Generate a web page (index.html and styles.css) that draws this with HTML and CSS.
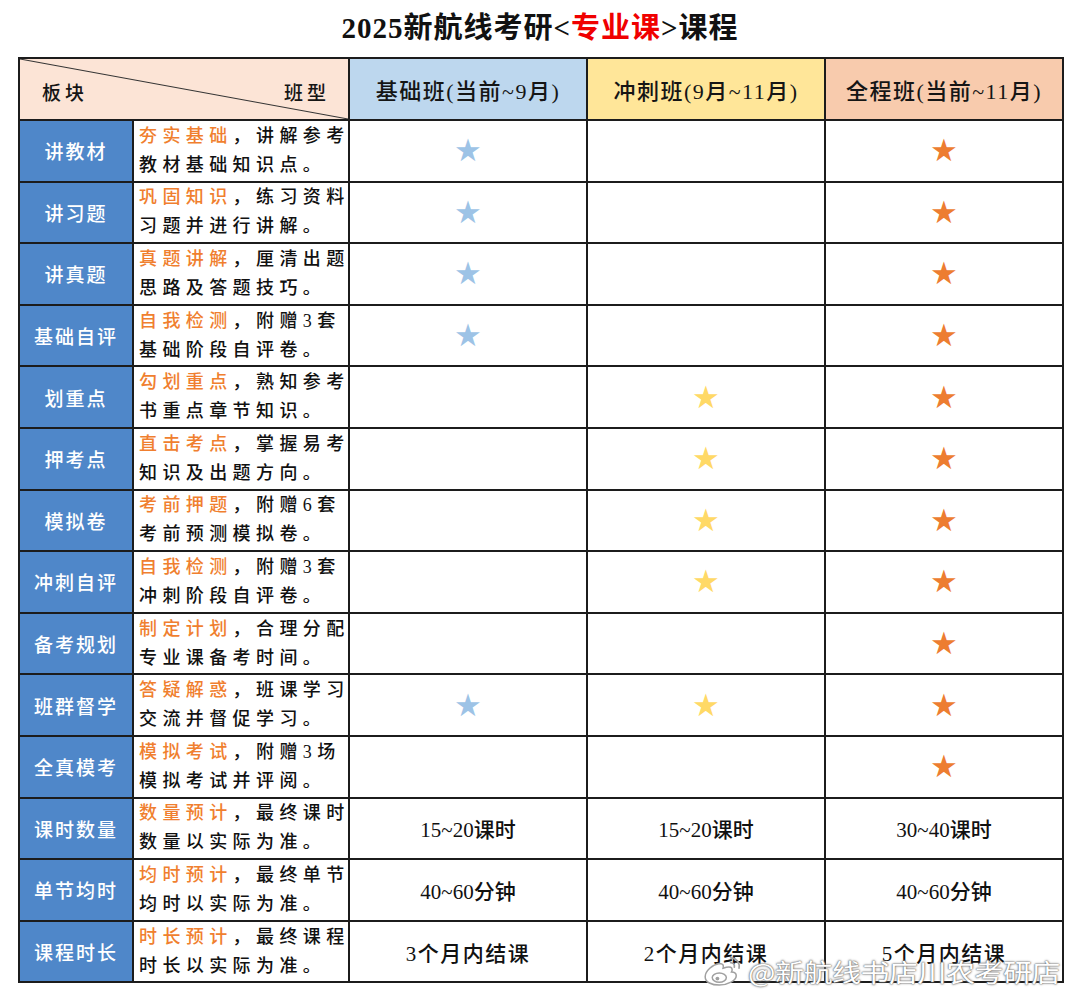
FILE: index.html
```html
<!DOCTYPE html>
<html lang="zh-CN">
<head>
<meta charset="utf-8">
<link rel="stylesheet" href="styles.css">
</head>
<body>
<div class="page">
  <h1 class="title">2025新航线考研&lt;<span class="red">专业课</span>&gt;课程</h1>
  <table class="grid">
    <colgroup>
      <col class="c1"><col class="c2"><col class="c3"><col class="c3"><col class="c3">
    </colgroup>
    <thead>
      <tr class="hrow">
        <th colspan="2" class="corner"><span class="lt">板块</span><span class="rt">班型</span></th>
        <th class="h-blue">基础班(当前~9月)</th>
        <th class="h-yellow">冲刺班(9月~11月)</th>
        <th class="h-orange">全程班(当前~11月)</th>
      </tr>
    </thead>
    <tbody>
      <tr><td class="cat">讲教材</td><td class="desc"><span class="o">夯实基础</span>，讲解参考<br>教材基础知识点。</td><td><span class="star b">★</span></td><td></td><td><span class="star r">★</span></td></tr>
      <tr><td class="cat">讲习题</td><td class="desc"><span class="o">巩固知识</span>，练习资料<br>习题并进行讲解。</td><td><span class="star b">★</span></td><td></td><td><span class="star r">★</span></td></tr>
      <tr><td class="cat">讲真题</td><td class="desc"><span class="o">真题讲解</span>，厘清出题<br>思路及答题技巧。</td><td><span class="star b">★</span></td><td></td><td><span class="star r">★</span></td></tr>
      <tr><td class="cat">基础自评</td><td class="desc"><span class="o">自我检测</span>，附赠3套<br>基础阶段自评卷。</td><td><span class="star b">★</span></td><td></td><td><span class="star r">★</span></td></tr>
      <tr><td class="cat">划重点</td><td class="desc"><span class="o">勾划重点</span>，熟知参考<br>书重点章节知识。</td><td></td><td><span class="star y">★</span></td><td><span class="star r">★</span></td></tr>
      <tr><td class="cat">押考点</td><td class="desc"><span class="o">直击考点</span>，掌握易考<br>知识及出题方向。</td><td></td><td><span class="star y">★</span></td><td><span class="star r">★</span></td></tr>
      <tr><td class="cat">模拟卷</td><td class="desc"><span class="o">考前押题</span>，附赠6套<br>考前预测模拟卷。</td><td></td><td><span class="star y">★</span></td><td><span class="star r">★</span></td></tr>
      <tr><td class="cat">冲刺自评</td><td class="desc"><span class="o">自我检测</span>，附赠3套<br>冲刺阶段自评卷。</td><td></td><td><span class="star y">★</span></td><td><span class="star r">★</span></td></tr>
      <tr><td class="cat">备考规划</td><td class="desc"><span class="o">制定计划</span>，合理分配<br>专业课备考时间。</td><td></td><td></td><td><span class="star r">★</span></td></tr>
      <tr><td class="cat">班群督学</td><td class="desc"><span class="o">答疑解惑</span>，班课学习<br>交流并督促学习。</td><td><span class="star b">★</span></td><td><span class="star y">★</span></td><td><span class="star r">★</span></td></tr>
      <tr><td class="cat">全真模考</td><td class="desc"><span class="o">模拟考试</span>，附赠3场<br>模拟考试并评阅。</td><td></td><td></td><td><span class="star r">★</span></td></tr>
      <tr><td class="cat">课时数量</td><td class="desc"><span class="o">数量预计</span>，最终课时<br>数量以实际为准。</td><td class="val">15~20课时</td><td class="val">15~20课时</td><td class="val">30~40课时</td></tr>
      <tr><td class="cat">单节均时</td><td class="desc"><span class="o">均时预计</span>，最终单节<br>均时以实际为准。</td><td class="val">40~60分钟</td><td class="val">40~60分钟</td><td class="val">40~60分钟</td></tr>
      <tr><td class="cat">课程时长</td><td class="desc"><span class="o">时长预计</span>，最终课程<br>时长以实际为准。</td><td class="val sp">3个月内结课</td><td class="val sp">2个月内结课</td><td class="val sp">5个月内结课</td></tr>
    </tbody>
  </table>
  <div class="watermark">
    <svg class="wb" viewBox="0 0 44 34" width="42" height="32">
      <path d="M17 9c-7 1-15 8-15 14 0 6 7 9 15 9 9 0 18-5 18-10 0-3-3-4-5-4 1-2 1-4-1-5-2-1-5 0-8 1 1-3 0-5-4-5z" fill="#fff" stroke="#a0a0a0" stroke-width="1.6"/>
      <ellipse cx="17" cy="24" rx="7.5" ry="5" fill="#fff" stroke="#a0a0a0" stroke-width="1.6"/>
      <circle cx="15" cy="25" r="2" fill="#a0a0a0"/>
      <path d="M29 3c6 0 10 5 9 11M29 8c2.5 0 4.5 2 4 5" fill="none" stroke="#a0a0a0" stroke-width="1.8" stroke-linecap="round"/>
    </svg>
    <span class="wt">@新航线书店川农考研店</span>
  </div>
</div>
</body>
</html>
```
FILE: styles.css
```css
html, body {
  margin: 0;
  padding: 0;
  background: #ffffff;
}
body {
  font-family: "Liberation Serif", "Noto Sans CJK SC", serif;
  color: #111;
}
.page {
  position: relative;
  width: 1080px;
  height: 1003px;
}
.title {
  margin: 0;
  height: 57px;
  line-height: 56px;
  text-align: center;
  font-size: 29px;
  font-weight: 700;
  letter-spacing: 1px;
  color: #111;
}
.red { color: #f00000; }
.grid {
  margin-left: 18px;
  width: 1045px;
  table-layout: fixed;
  border-collapse: collapse;
  border: 2px solid #1c1c1c;
}
.c1 { width: 114px; }
.c2 { width: 216px; }
.c3 { width: 238px; }
.grid th, .grid td {
  border: 2px solid #1c1c1c;
  padding: 0;
  text-align: center;
  vertical-align: middle;
}
.hrow { height: 62px; }
.grid tbody tr { height: 61.6px; }
.grid th {
  font-size: 22px;
  font-weight: 500;
  letter-spacing: 1.5px;
  color: #151515;
}
.corner {
  position: relative;
  background-color: #fce4d6;
  background-image: linear-gradient(to top right, transparent calc(50% - 1px), #333 50%, transparent calc(50% + 1px));
}
.corner .lt, .corner .rt {
  position: absolute;
  top: 19px;
  font-size: 19px;
  letter-spacing: 4px;
}
.corner .lt { left: 22px; }
.corner .rt { right: 18px; }
.h-blue { background: #bdd7ee; }
.h-yellow { background: #ffe699; }
.h-orange { background: #f8cbad; }
.cat {
  background: #4f87c9;
  color: #ffffff;
  font-size: 19px;
  font-weight: 500;
  letter-spacing: 2px;
}
.desc {
  text-align: left !important;
  padding-left: 5px !important;
  font-size: 18px;
  font-weight: 500;
  letter-spacing: 5.4px;
  line-height: 29px;
  white-space: nowrap;
  color: #111;
}
.o { color: #f07f2f; }
.star {
  font-family: "DejaVu Sans", sans-serif;
  font-size: 31px;
  line-height: 1;
}
.star.b { color: #9dc3e6; }
.star.y { color: #ffd966; }
.star.r { color: #ed7d31; }
.val {
  font-size: 21px;
  font-weight: 500;
}
.val.sp { letter-spacing: 1.5px; }
.watermark {
  position: absolute;
  left: 703px;
  top: 954px;
  display: flex;
  align-items: center;
  gap: 3px;
}
.wt {
  font-family: "Noto Sans CJK SC", sans-serif;
  font-size: 29px;
  line-height: 34px;
  font-weight: 400;
  color: #ffffff;
  letter-spacing: -0.5px;
  text-shadow: 0 0 2px #6a6a6a, 0 0 1px #6a6a6a, 0 0 3px #999;
  transform: scaleY(0.85);
}
```
